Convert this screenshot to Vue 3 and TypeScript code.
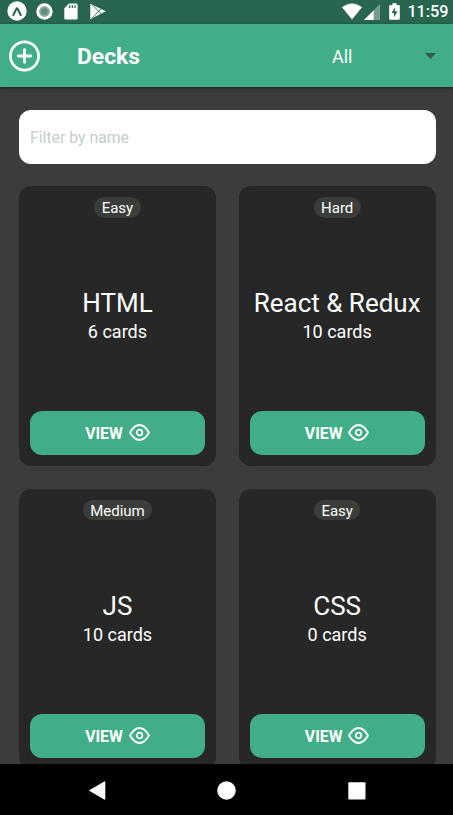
<script setup lang="ts">
interface Deck {
  name: string
  level: string
  count: number
}

const decks: Deck[] = [
  { name: 'HTML', level: 'Easy', count: 6 },
  { name: 'React & Redux', level: 'Hard', count: 10 },
  { name: 'JS', level: 'Medium', count: 10 },
  { name: 'CSS', level: 'Easy', count: 0 },
]
</script>

<template>
  <div class="screen">
    <div class="status">
      <div class="notifications">
        <svg width="20" height="20" viewBox="0 0 20 20">
          <circle cx="10" cy="10" r="9.7" fill="#fff" />
          <path d="M6.3 14 L9.5 7.6 Q10 6.9 10.5 7.6 L13.7 14" fill="none" stroke="#286650" stroke-width="2.1" stroke-linecap="round" stroke-linejoin="round" />
        </svg>
        <svg width="17" height="17" viewBox="0 0 17 17">
          <circle cx="8.5" cy="8.5" r="8.2" fill="#fff" />
          <circle cx="8.5" cy="8.5" r="5.4" fill="#88aa9d" />
          <circle cx="8.5" cy="8.5" r="3.3" fill="#648c7c" />
        </svg>
        <svg class="sd" width="14" height="17" viewBox="0 0 14 17">
          <path d="M5 .5H12.2Q13.6 .5 13.6 2V15Q13.6 16.5 12.2 16.5H1.7Q.3 16.5 .3 15V5.3Z" fill="#fff" />
          <path d="M5.8 2.2V5M8.4 2.2V5M11 2.2V5" stroke="#286650" stroke-width="1.3" />
        </svg>
        <svg class="play" width="16" height="17" viewBox="0 0 16 17">
          <path d="M.3 .7 15.8 8.2 .3 16.2Z" fill="#fff" />
          <path d="M2 1.6 11.5 11M2 15.2 11.5 5.6" fill="none" stroke="#286650" stroke-width=".9" />
        </svg>
      </div>
      <div class="indicators">
        <svg class="wifi" width="20" height="17" viewBox="0 0 20 17">
          <path d="M0 4.2Q10-3.4 20 4.2L10 16.4Z" fill="#fff" />
        </svg>
        <svg class="signal" width="16" height="16" viewBox="0 0 16 16">
          <path d="M16 0V16H0Z" fill="#779b8e" />
          <path d="M9.6 6.4V16H0Z" fill="#fff" />
        </svg>
        <svg class="battery" width="11" height="17" viewBox="0 0 11 17">
          <path d="M3.4 .3H7.6V2H9.5Q10.8 2 10.8 3.3V15.5Q10.8 16.7 9.5 16.7H1.5Q.2 16.7 .2 15.5V3.3Q.2 2 1.5 2H3.4Z" fill="#fff" />
          <path d="M6.2 4.4 2.5 10H5V14.2L8.6 8.5H6.2Z" fill="#286650" />
        </svg>
        <span>11:59</span>
      </div>
    </div>
    <header class="header">
      <svg width="32" height="32" viewBox="0 0 32 32" fill="none" stroke="#fff" stroke-linecap="round">
        <circle cx="15.5" cy="16" r="14.1" stroke-width="2.7" />
        <path d="M15.5 9.8V22.2M9.3 16H21.7" stroke-width="2.9" />
      </svg>
      <h1>Decks</h1>
      <div class="picker">
        <span>All</span>
        <svg width="11" height="6" viewBox="0 0 11 6"><path d="M0 0H11L5.5 6Z" fill="#2a5d4b" /></svg>
      </div>
    </header>
    <main class="content">
      <input class="filter" type="text" placeholder="Filter by name" />
      <div class="grid">
        <article v-for="deck in decks" :key="deck.name" class="card">
          <span class="badge">{{ deck.level }}</span>
          <div class="info">
            <h2>{{ deck.name }}</h2>
            <p>{{ deck.count }} cards</p>
          </div>
          <button class="view">
            <span>VIEW</span>
            <svg width="21" height="17" viewBox="0 0 21 17" fill="none" stroke="#fff">
              <path d="M1 8.5C3 5 6.5 1 10.5 1S18 5 20 8.5C18 12 14.5 16 10.5 16S3 12 1 8.5Z" stroke-width="1.8" stroke-linejoin="round" />
              <circle cx="10.5" cy="8.5" r="2.8" stroke-width="1.7" />
            </svg>
          </button>
        </article>
      </div>
    </main>
    <nav class="nav">
      <svg width="17" height="19" viewBox="0 0 17 19"><path d="M15.6 1V18L1 9.5Z" fill="#fff" stroke="#fff" stroke-width="1.4" stroke-linejoin="round" /></svg>
      <svg width="19" height="19" viewBox="0 0 19 19"><circle cx="9.5" cy="9.5" r="9.3" fill="#fff" /></svg>
      <svg width="18" height="18" viewBox="0 0 18 18"><rect x=".3" y=".3" width="17.2" height="17.2" rx="1" fill="#fff" /></svg>
    </nav>
  </div>
</template>

<style>
body {
  margin: 0;
  overflow: hidden;
}
</style>

<style scoped>
.screen {
  display: flex;
  flex-direction: column;
  width: 453px;
  height: 815px;
  overflow: hidden;
  background: #3b3d3a;
  color: #fff;
  font-family: Roboto, sans-serif;
}
svg {
  display: block;
  flex: none;
}
.status {
  display: flex;
  flex: none;
  justify-content: space-between;
  box-sizing: border-box;
  height: 24px;
  padding: 1px 4.5px 0 6.5px;
  background: #286650;
}
.notifications,
.indicators {
  display: flex;
  align-items: center;
  height: 20px;
}
.notifications {
  gap: 9px;
}
.sd {
  margin-left: 2.5px;
}
.play {
  margin-left: 3px;
}
.signal {
  margin: 1px 9px 0 2px;
}
.indicators span {
  margin-left: 7.5px;
  font-size: 16.2px;
  font-weight: 500;
  line-height: 20px;
  padding-top: 2px;
}
.header {
  display: flex;
  flex: none;
  align-items: center;
  box-sizing: border-box;
  height: 63px;
  padding: 1px 17px 0 9px;
  background: #42ad89;
  box-shadow: 0 1px 3px rgba(0, 0, 0, 0.55);
  position: relative;
}
.header h1 {
  margin: 2px 0 0 36px;
  font-size: 22.8px;
  font-weight: 700;
  line-height: 30px;
}
.picker {
  display: flex;
  align-items: center;
  justify-content: space-between;
  width: 104px;
  margin-left: auto;
  font-size: 18px;
  line-height: 28px;
}
.picker span {
  padding-top: 1px;
}
.content {
  flex: 1;
  min-height: 0;
  overflow: hidden;
  padding: 23px 17.4px 0 19px;
}
.filter {
  display: block;
  box-sizing: border-box;
  width: 100%;
  height: 53.5px;
  padding: 1px 11px 0;
  border: 0;
  border-radius: 12px;
  background: #fff;
  font-family: inherit;
  font-size: 15.8px;
}
.filter::placeholder {
  color: #c5cdca;
}
.grid {
  display: grid;
  grid-template-columns: 1fr 1fr;
  gap: 23px 22.8px;
  margin-top: 22.5px;
}
.card {
  display: flex;
  flex-direction: column;
  align-items: center;
  box-sizing: border-box;
  height: 279.8px;
  padding: 11px 11px 10.5px;
  border-radius: 12px;
  background: #272727;
}
.badge {
  height: 20.5px;
  padding: 0 7.5px;
  border-radius: 11px;
  background: #3b3d3a;
  font-size: 15px;
  line-height: 22.6px;
}
.info {
  display: flex;
  flex: 1;
  flex-direction: column;
  justify-content: center;
  text-align: center;
  white-space: nowrap;
}
.info h2 {
  margin: 2px 0 0;
  font-size: 26px;
  font-weight: 400;
  line-height: 34px;
}
.info p {
  margin: 0;
  font-size: 18px;
  line-height: 24px;
}
.view {
  display: flex;
  flex: none;
  align-items: center;
  align-self: stretch;
  justify-content: center;
  gap: 6px;
  height: 44.5px;
  padding: 0 0 1px;
  border: 0;
  border-radius: 12px;
  background: #42ad89;
  color: #fff;
  font-family: inherit;
  font-size: 15.8px;
  font-weight: 700;
}
.view span {
  padding-top: 2px;
}
.nav {
  display: flex;
  flex: none;
  align-items: center;
  justify-content: space-between;
  box-sizing: border-box;
  height: 51px;
  padding: 2px 87.5px 0 88.5px;
  background: #000;
}
</style>
